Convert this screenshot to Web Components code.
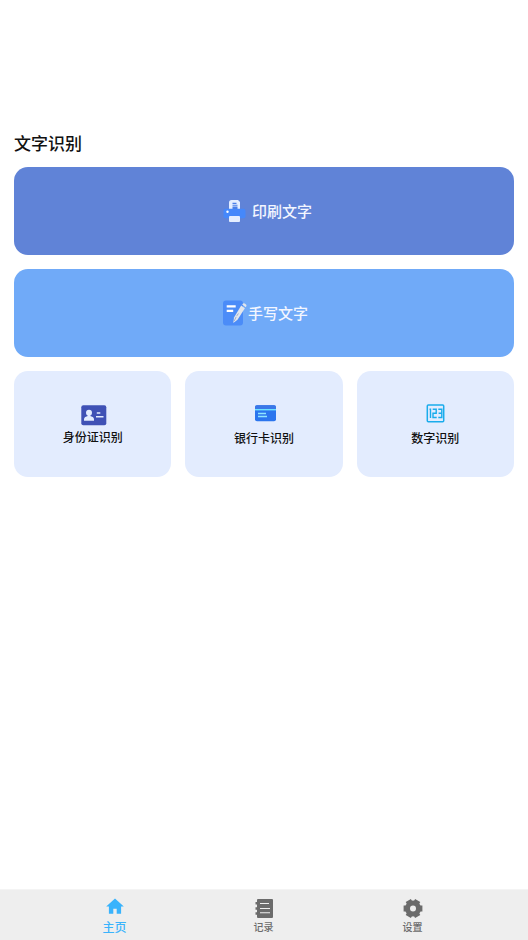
<!DOCTYPE html>
<html lang="zh-CN">
<head>
<meta charset="utf-8">
<meta name="viewport" content="width=device-width, initial-scale=1">
<title>文字识别</title>
<style>
body { margin: 0; background: #fff; color: #111; font-family: Roboto, "Noto Sans CJK SC", sans-serif; }
</style>
</head>
<body>
<ocr-app></ocr-app>

<template id="ocr-app">
  <style>
    :host { display: flex; flex-direction: column; min-height: 100vh; }
    main { flex: 1; padding: 132px 14px 24px; }
    h1 { margin: 0 0 11px; font-size: 17px; line-height: 24px; font-weight: 500; color: #111; }
    .stack { display: grid; gap: 14px; }
    .row { display: grid; grid-template-columns: repeat(3, 1fr); gap: 14px; }
    nav { display: grid; grid-template-columns: repeat(3, 1fr); padding: 0 41px 0 40px; background: #eee; border-top: 1px solid #f4f4f4; }
    svg { display: block; }
  </style>
  <main>
    <h1>文字识别</h1>
    <div class="stack">
      <wide-action label="印刷文字" tone="indigo">
        <svg width="36" height="26" viewBox="0 0 36 26" aria-hidden="true">
          <g transform="translate(0 1)">
            <path d="M13 11V3.500Q13 1 15.500 1H22L24 3V11Z" fill="#e4eeff"/>
            <path d="M16.500 3.800h4v1.200h-4zM16.500 5.800h5v1h-5zM16.500 7.500h5V10h-5z" fill="#4a7fe8"/>
            <rect x="7.500" y="9.800" width="22" height="9.500" rx="2" fill="#4588fb"/>
            <circle cx="11.500" cy="12.700" r="1.200" fill="#fff"/>
            <rect x="13" y="17" width="11" height="6" rx="1" fill="#e4eeff"/>
          </g>
        </svg>
      </wide-action>
      <wide-action label="手写文字" tone="sky">
        <svg width="28" height="26" viewBox="0 0 28 26" aria-hidden="true">
          <rect x="3" y="0.500" width="20" height="25" rx="3" fill="#4b8cf8"/>
          <path d="M6.700 5.200h9v2.200h-9zM6.700 9.700h6.500v2.200H6.700z" fill="#fff"/>
          <path d="M21.200 5.600l3.700 2.600-7.400 11.600L13.300 23l.7-5.400z" fill="#e2e6ec"/>
          <path d="M22.200 4.600l.9-1q.9-.7 2 .1l.9.700q.9.800.3 1.800l-.6 1z" fill="#e2e6ec"/>
          <path d="M18.400 13.500l-1.600 2.400M16.200 16.800l-2 4.200" stroke="#8aa0c8" stroke-width=".8" fill="none"/>
        </svg>
      </wide-action>
      <div class="row">
        <tile-action label="身份证识别">
          <svg width="28" height="26" viewBox="0 0 28 26" aria-hidden="true">
            <rect x="2.300" y="3.300" width="25" height="20" rx="2" fill="#3f51b5"/>
            <circle cx="10" cy="10.700" r="3" fill="#e3ecfe"/>
            <path d="M8.700 12h2.600v2l2.500 1q1.200.5 1.200 2.500v1.300H5v-1.300q0-2 1.200-2.500l2.500-1z" fill="#e3ecfe"/>
            <path d="M17.800 11h3.500M17 14.800h7.500" stroke="#e3ecfe" stroke-width="1.500"/>
          </svg>
        </tile-action>
        <tile-action label="银行卡识别">
          <svg width="28" height="28" viewBox="0 0 28 28" aria-hidden="true">
            <rect x="5" y="4.300" width="21" height="16" rx="2" fill="#2b75ee"/>
            <path d="M5 8.200V6.200Q5 4.200 7 4.200h17q2 0 2 2v2z" fill="#3a77e8"/>
            <path d="M5 8.700h21" stroke="#6de2ff" stroke-width="1.400"/>
            <path d="M8 12.500h8M8 15.500h9" stroke="#8ee5ff" stroke-width="1.300"/>
          </svg>
        </tile-action>
        <tile-action label="数字识别">
          <svg width="28" height="28" viewBox="0 0 28 28" aria-hidden="true" fill="none" stroke="#1aacec">
            <rect x="6.300" y="4" width="16.400" height="16.800" rx="1" stroke-width="1.500"/>
            <path d="M8.500 8.300H9.500V17M11.700 8.300h3.500v4h-3.200v4.200h3.700M17.300 8.300H20.800v8.200h-3.500M17.600 12.300h3" stroke-width="1.400"/>
          </svg>
        </tile-action>
      </div>
    </div>
  </main>
  <nav aria-label="主导航">
    <tab-item label="主页" href="#home" active>
      <svg width="24" height="22" viewBox="0 0 24 22" aria-hidden="true" fill="currentColor">
        <path d="M12 1.500L3.200 9.500H5.900V16.700h4.400v-5h3.400v5h4.400V9.500h2.700z"/>
      </svg>
    </tab-item>
    <tab-item label="记录" href="#records">
      <svg width="24" height="22" viewBox="0 0 24 22" aria-hidden="true">
        <path d="M6 2h14q1 0 1 1v17q0 1-1 1H6q-1 0-1-1v-2.200H3.500v-2.600H5V12.800H3.500v-2.600H5V7.500H3.500V4.900H5V3q0-1 1-1z" fill="currentColor"/>
        <path d="M8 6.500h9M8 11.500h10M8 15.700h10" stroke="#eee" stroke-width="1.100"/>
      </svg>
    </tab-item>
    <tab-item label="设置" href="#settings">
      <svg width="24" height="22" viewBox="0 0 24 22" aria-hidden="true">
        <g stroke="currentColor" stroke-width="6">
          <path d="M2.600 11.500H21.400M7.300 3.400L16.700 19.600M16.700 3.400L7.300 19.600"/>
        </g>
        <circle cx="12" cy="11.500" r="8" fill="currentColor"/>
        <circle cx="12" cy="11.500" r="3" fill="#eee"/>
      </svg>
    </tab-item>
  </nav>
</template>

<template id="wide-action">
  <style>
    :host { display: block; }
    button { display: flex; align-items: center; justify-content: center; width: 100%; padding: 30px 14px; border: 0; border-radius: 14px; background: #6083d7; color: #f3f6ff; font: 500 15px/26px Roboto, "Noto Sans CJK SC", sans-serif; cursor: pointer; }
    span { padding-top: 2px; }
    :host([tone="sky"]) button { background: #70aaf8; }
  </style>
  <button type="button"><slot></slot><span></span></button>
</template>

<template id="tile-action">
  <style>
    :host { display: grid; }
    button { display: flex; flex-direction: column; align-items: center; justify-content: center; width: 100%; min-height: 106px; padding: 1px 0 0; border: 0; border-radius: 14px; background: #e3ecfe; color: #111; font: 500 12px/18px Roboto, "Noto Sans CJK SC", sans-serif; cursor: pointer; }
    span { margin-top: 1px; }
  </style>
  <button type="button"><slot></slot><span></span></button>
</template>

<template id="tab-item">
  <style>
    :host { display: block; }
    a { display: flex; flex-direction: column; align-items: center; padding: 7px 0 3px; color: #6b6b6b; font-size: 10px; line-height: 18px; font-weight: 500; text-decoration: none; }
    :host([active]) a { color: #39b3fc; font-size: 12px; }
  </style>
  <a><slot></slot><span></span></a>
</template>

<script>
const stamp = (host, id) => {
  const root = host.attachShadow({ mode: "open" });
  root.append(document.getElementById(id).content.cloneNode(true));
  return root;
};

class LabelledAction extends HTMLElement {
  connectedCallback() {
    if (this.shadowRoot) return;
    stamp(this, this.localName).querySelector("span").textContent = this.getAttribute("label");
  }
}
class WideAction extends LabelledAction {}
class TileAction extends LabelledAction {}
class TabItem extends LabelledAction {
  connectedCallback() {
    super.connectedCallback();
    const link = this.shadowRoot.querySelector("a");
    link.href = this.getAttribute("href");
    if (this.hasAttribute("active")) link.setAttribute("aria-current", "page");
  }
}
class OcrApp extends HTMLElement {
  connectedCallback() {
    if (!this.shadowRoot) stamp(this, "ocr-app");
  }
}
customElements.define("wide-action", WideAction);
customElements.define("tile-action", TileAction);
customElements.define("tab-item", TabItem);
customElements.define("ocr-app", OcrApp);
</script>
</body>
</html>
